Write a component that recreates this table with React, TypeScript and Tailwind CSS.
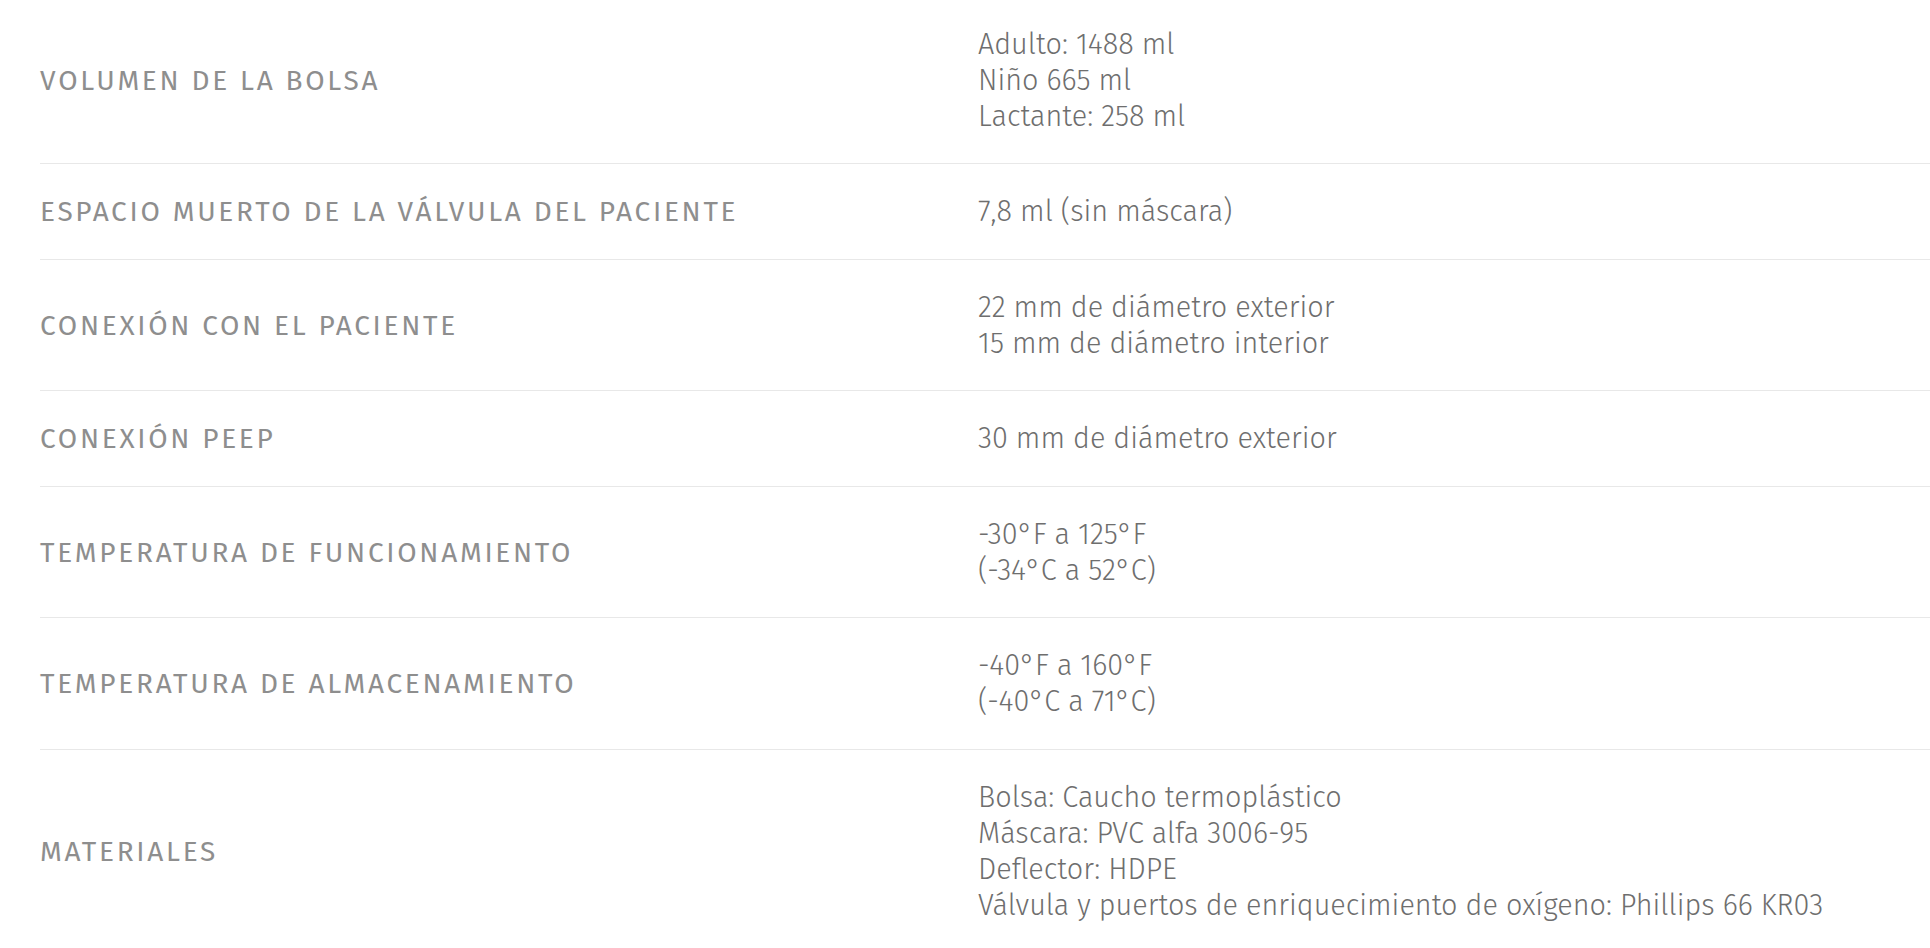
import React from 'react';

interface Spec {
    label: string;
    lines: string[];
}

const specs: Spec[] = [
    { label: 'Volumen de la bolsa', lines: ['Adulto: 1488 ml', 'Niño 665 ml', 'Lactante: 258 ml'] },
    { label: 'Espacio muerto de la válvula del paciente', lines: ['7,8 ml (sin máscara)'] },
    { label: 'Conexión con el paciente', lines: ['22 mm de diámetro exterior', '15 mm de diámetro interior'] },
    { label: 'Conexión PEEP', lines: ['30 mm de diámetro exterior'] },
    { label: 'Temperatura de funcionamiento', lines: ['-30°F a 125°F', '(-34°C a 52°C)'] },
    { label: 'Temperatura de almacenamiento', lines: ['-40°F a 160°F', '(-40°C a 71°C)'] },
    {
        label: 'Materiales',
        lines: [
            'Bolsa: Caucho termoplástico',
            'Máscara: PVC alfa 3006-95',
            'Deflector: HDPE',
            'Válvula y puertos de enriquecimiento de oxígeno: Phillips 66 KR03',
        ],
    },
];

const App = () => {
    return (
        <div className="min-h-screen bg-white pl-[40px] font-['Fira_Sans','Open_Sans',sans-serif]">
            {specs.map((spec, i) => (
                <div
                    key={spec.label}
                    className={`grid grid-cols-[938px_1fr] items-center ${
                        i === 0 ? 'pt-[26.5px]' : 'pt-[30px]'
                    } pb-[28.5px] ${i < specs.length - 1 ? 'border-b border-[#e8e8e8]' : ''}`}
                >
                    <div className="text-[28px] font-normal leading-[36px] uppercase tracking-[2.7px] text-[#8e8e8e]">
                        {spec.label}
                    </div>
                    <div className="text-[28.8px] font-light leading-[36px] text-[#6e6e6e]">
                        {spec.lines.map((line) => (
                            <div key={line}>{line}</div>
                        ))}
                    </div>
                </div>
            ))}
        </div>
    );
};

export default App;
